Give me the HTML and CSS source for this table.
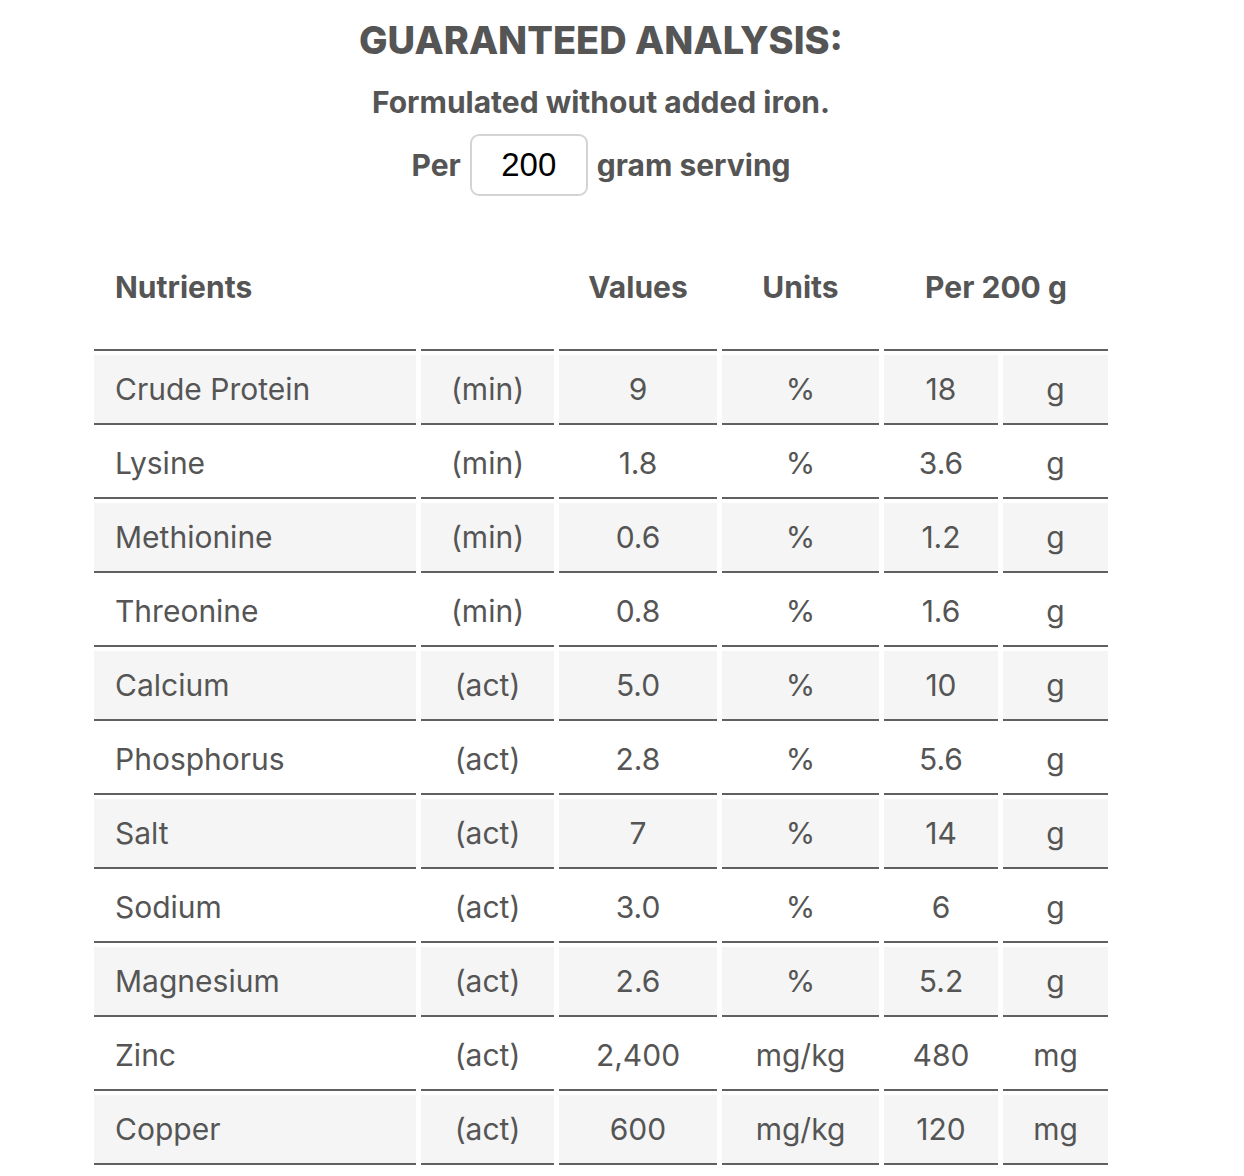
FILE: index.html
```html
<!DOCTYPE html>
<html lang="en">
<head>
<meta charset="utf-8">
<title>Guaranteed Analysis</title>
<link rel="stylesheet" href="styles.css">
</head>
<body>
<main class="page">
  <h1 class="title">GUARANTEED ANALYSIS:</h1>
  <p class="subtitle">Formulated without added iron.</p>
  <div class="serving">
    <span>Per</span>
    <span class="serving-box">200</span>
    <span>gram serving</span>
  </div>
  <table class="analysis">
    <colgroup>
      <col class="c-name"><col class="c-basis"><col class="c-value"><col class="c-unit"><col class="c-per"><col class="c-perunit">
    </colgroup>
    <thead>
      <tr>
        <th class="left">Nutrients</th>
        <th></th>
        <th>Values</th>
        <th>Units</th>
        <th colspan="2">Per 200 g</th>
      </tr>
    </thead>
    <tbody>
      <tr><td class="left">Crude Protein</td><td>(min)</td><td>9</td><td>%</td><td>18</td><td>g</td></tr>
      <tr><td class="left">Lysine</td><td>(min)</td><td>1.8</td><td>%</td><td>3.6</td><td>g</td></tr>
      <tr><td class="left">Methionine</td><td>(min)</td><td>0.6</td><td>%</td><td>1.2</td><td>g</td></tr>
      <tr><td class="left">Threonine</td><td>(min)</td><td>0.8</td><td>%</td><td>1.6</td><td>g</td></tr>
      <tr><td class="left">Calcium</td><td>(act)</td><td>5.0</td><td>%</td><td>10</td><td>g</td></tr>
      <tr><td class="left">Phosphorus</td><td>(act)</td><td>2.8</td><td>%</td><td>5.6</td><td>g</td></tr>
      <tr><td class="left">Salt</td><td>(act)</td><td>7</td><td>%</td><td>14</td><td>g</td></tr>
      <tr><td class="left">Sodium</td><td>(act)</td><td>3.0</td><td>%</td><td>6</td><td>g</td></tr>
      <tr><td class="left">Magnesium</td><td>(act)</td><td>2.6</td><td>%</td><td>5.2</td><td>g</td></tr>
      <tr><td class="left">Zinc</td><td>(act)</td><td>2,400</td><td>mg/kg</td><td>480</td><td>mg</td></tr>
      <tr><td class="left">Copper</td><td>(act)</td><td>600</td><td>mg/kg</td><td>120</td><td>mg</td></tr>
    </tbody>
  </table>
</main>
</body>
</html>
```

FILE: styles.css
```css
html, body {
  margin: 0;
  padding: 0;
  background: #ffffff;
}

body {
  font-family: "Inter", "Noto Sans", sans-serif;
  color: #555555;
}

.page {
  width: 1024px;
  margin-left: 89px;
  padding-top: 17px;
}

.title {
  margin: 0;
  text-align: center;
  font-size: 38px;
  line-height: 46px;
  font-weight: 800;
  color: #555555;
}

.subtitle {
  margin: 19px 0 0;
  text-align: center;
  font-size: 30px;
  line-height: 40px;
  font-weight: 700;
}

.serving {
  margin-top: 12px;
  display: flex;
  justify-content: center;
  align-items: center;
  gap: 9px;
  font-size: 30px;
  font-weight: 700;
  height: 62px;
}

.serving-box {
  box-sizing: border-box;
  width: 118px;
  height: 62px;
  border: 2px solid #d4d4d4;
  border-radius: 9px;
  display: flex;
  align-items: center;
  justify-content: center;
  font-family: "Liberation Sans", Arial, sans-serif;
  font-weight: 400;
  font-size: 33px;
  color: #000000;
}

.analysis {
  margin-top: 25px;
  table-layout: fixed;
  border-collapse: separate;
  border-spacing: 5px 4px;
  width: 1024px;
  font-size: 30px;
}

.c-name { width: 322px; }
.c-basis { width: 133px; }
.c-value { width: 158px; }
.c-unit { width: 157px; }
.c-per { width: 114px; }
.c-perunit { width: 105px; }

.analysis th,
.analysis td {
  padding: 0;
  text-align: center;
  vertical-align: middle;
  border-bottom: 2px solid #606060;
}

.analysis th {
  height: 124px;
  font-weight: 700;
}

.analysis td {
  height: 68px;
  font-weight: 400;
}

.analysis .left {
  text-align: left;
  padding-left: 21px;
}

.analysis tbody tr:nth-child(odd) td {
  background: #f5f5f5;
}
```
